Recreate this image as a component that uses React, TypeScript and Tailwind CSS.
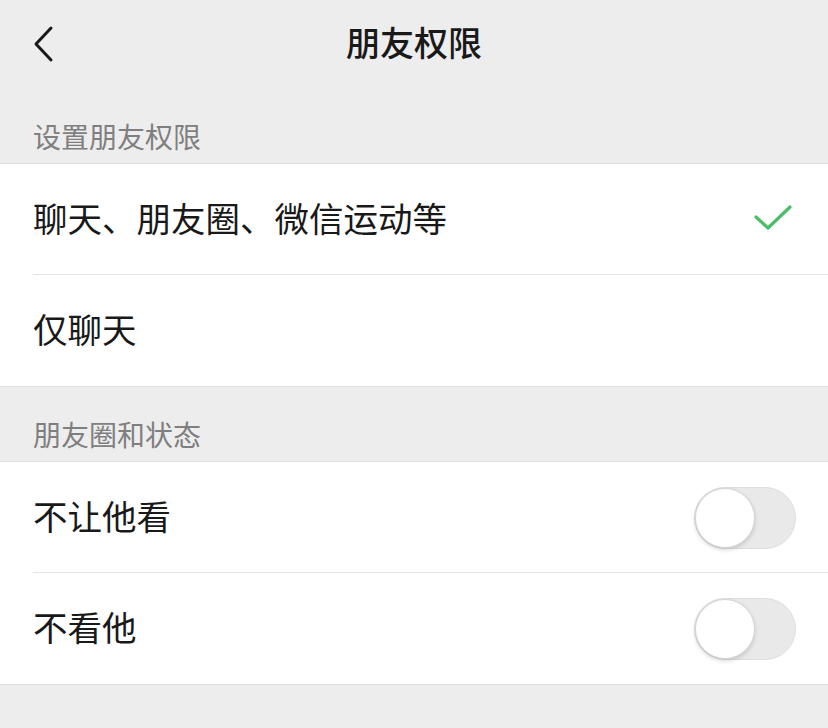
import React from "react";

const font = { fontFamily: '"Noto Sans CJK SC", "Noto Sans", sans-serif' };

function Toggle() {
  return (
    <div className="relative h-[62px] w-[102px] rounded-full border border-[#dedede] bg-[#e9e9e9]">
      <div className="absolute left-0 top-0 h-[60px] w-[60px] rounded-full border border-[#d6d6d6] bg-white shadow-[0_2px_4px_rgba(0,0,0,0.15)]" />
    </div>
  );
}

function Check() {
  return (
    <svg width="40" height="30" viewBox="0 0 40 30" className="block">
      <path d="M3 12 L15 23 L37 2" fill="none" stroke="#4bbd6a" strokeWidth="3.2" strokeLinecap="round" strokeLinejoin="round" />
    </svg>
  );
}

function Row({ label, right, divider }: { label: string; right?: React.ReactNode; divider?: boolean }) {
  return (
    <div className="relative flex h-[111px] items-center justify-between pl-[33px] pr-[33px]">
      <span className="-mt-[5px] text-[34.5px] leading-[40px] text-[#191919]">{label}</span>
      {right}
      {divider && <div className="absolute bottom-0 left-[33px] right-0 h-px bg-[#e5e5e5]" />}
    </div>
  );
}

export default function App() {
  return (
    <div className="h-[728px] w-[828px] overflow-hidden bg-[#ededed]" style={font}>
      <div className="relative flex h-[88px] items-center justify-center">
        <svg width="24" height="40" viewBox="0 0 24 40" className="absolute left-[31px] top-[24px]">
          <path d="M20 4 L5 20 L20 36" fill="none" stroke="#191919" strokeWidth="3" strokeLinecap="round" strokeLinejoin="round" />
        </svg>
        <span className="-mt-[4px] text-[34px] font-medium leading-[40px] text-[#191919]">朋友权限</span>
      </div>
      <div className="flex h-[75px] items-end pb-[11px] pl-[33px]">
        <span className="text-[28px] leading-[32px] text-[#7f7f7f]">设置朋友权限</span>
      </div>
      <div className="border-y border-[#e0e0e0] bg-white">
        <Row label="聊天、朋友圈、微信运动等" right={<div className="pr-[2px]"><Check /></div>} divider />
        <Row label="仅聊天" />
      </div>
      <div className="flex h-[74px] items-end pb-[11px] pl-[33px]">
        <span className="text-[28px] leading-[32px] text-[#7f7f7f]">朋友圈和状态</span>
      </div>
      <div className="border-y border-[#e0e0e0] bg-white">
        <Row label="不让他看" right={<div className="-mr-px"><Toggle /></div>} divider />
        <Row label="不看他" right={<div className="-mr-px"><Toggle /></div>} />
      </div>
    </div>
  );
}
